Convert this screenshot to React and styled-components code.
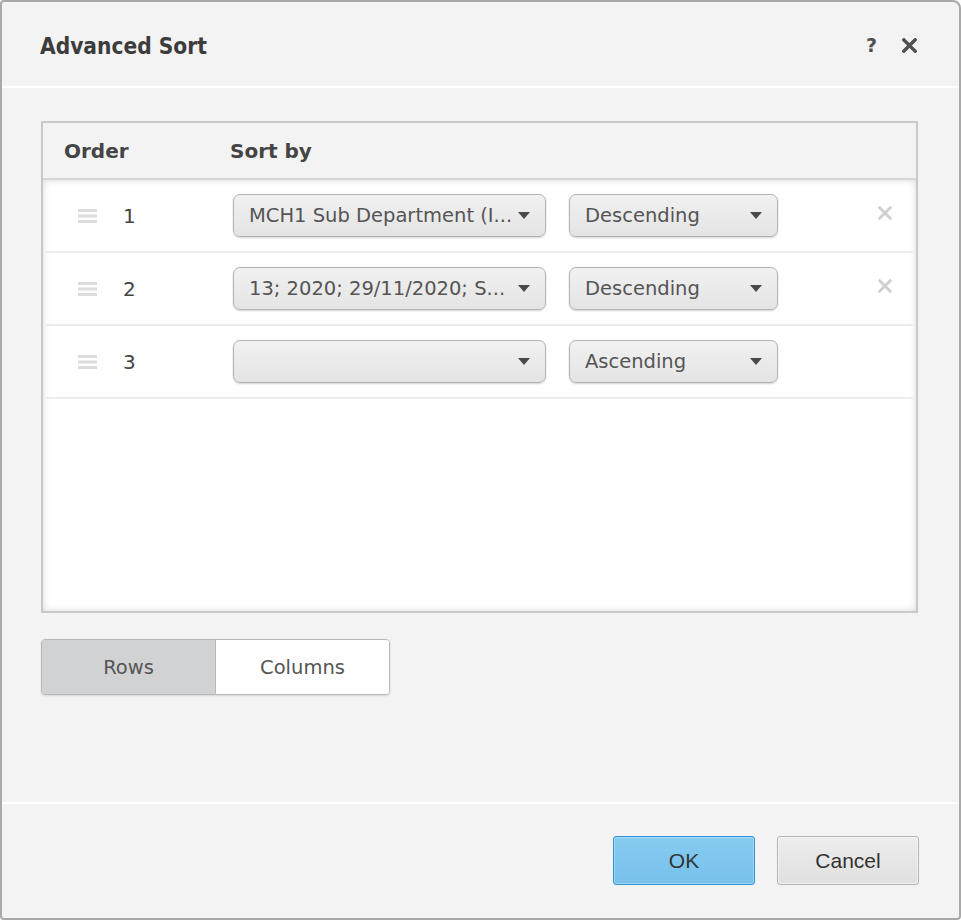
import React from 'react';
import styled, { createGlobalStyle } from 'styled-components';

const GlobalStyle = createGlobalStyle`
    html, body {
        margin: 0;
        padding: 0;
        background: #ffffff;
    }
    body {
        font-family: "DejaVu Sans", "Liberation Sans", sans-serif;
    }
`;

const sortRows = [
    { order: 1, field: 'MCH1 Sub Department (I...', direction: 'Descending', removable: true },
    { order: 2, field: '13; 2020; 29/11/2020; S...', direction: 'Descending', removable: true },
    { order: 3, field: '', direction: 'Ascending', removable: false }
];

const DragHandle = () => (
    <svg width="19" height="14" viewBox="0 0 19 14">
        <rect x="0" y="0" width="19" height="3" fill="#dcdcdc" />
        <rect x="0" y="5.5" width="19" height="3" fill="#dcdcdc" />
        <rect x="0" y="11" width="19" height="3" fill="#dcdcdc" />
    </svg>
);

const Caret = () => (
    <svg width="12" height="7" viewBox="0 0 12 7">
        <polygon points="0,0 12,0 6,7" fill="#4a4a4a" />
    </svg>
);

const Cross = ({ size, color, weight }) => (
    <svg width={size} height={size} viewBox="0 0 12 12">
        <path d="M1.5 1.5 L10.5 10.5 M10.5 1.5 L1.5 10.5" stroke={color} strokeWidth={weight} strokeLinecap="square" />
    </svg>
);

export default function App() {
    return (
        <>
            <GlobalStyle />
            <Dialog>
                <Header>
                    <Title>Advanced Sort</Title>
                    <HeaderTools>
                        <HelpMark>?</HelpMark>
                        <Cross size={15} color="#505050" weight={2.8} />
                    </HeaderTools>
                </Header>
                <Body>
                    <Panel>
                        <GridHead>
                            <OrderHead>Order</OrderHead>
                            <span>Sort by</span>
                        </GridHead>
                        <GridRows>
                            {sortRows.map(row => (
                                <Row key={row.order}>
                                    <Handle><DragHandle /></Handle>
                                    <OrderNum>{row.order}</OrderNum>
                                    <Select width={313}>
                                        <SelectText>{row.field}</SelectText>
                                        <Caret />
                                    </Select>
                                    <Select width={209}>
                                        <SelectText>{row.direction}</SelectText>
                                        <Caret />
                                    </Select>
                                    <Remove>
                                        {row.removable && <Cross size={14} color="#cfcfcf" weight={2.4} />}
                                    </Remove>
                                </Row>
                            ))}
                        </GridRows>
                    </Panel>
                    <Toggle>
                        <ToggleOption active>Rows</ToggleOption>
                        <ToggleOption>Columns</ToggleOption>
                    </Toggle>
                </Body>
                <Footer>
                    <DialogButton primary>OK</DialogButton>
                    <DialogButton>Cancel</DialogButton>
                </Footer>
            </Dialog>
        </>
    );
}

const Dialog = styled.div`
    box-sizing: border-box;
    width: 961px;
    height: 920px;
    background: #f3f3f3;
    border: 2px solid #a9a9a9;
    border-radius: 4px 8px 4px 4px;
    display: flex;
    flex-direction: column;
    color: #454545;
`;

const Header = styled.div`
    height: 84px;
    display: flex;
    align-items: center;
    justify-content: space-between;
    padding: 0 42px 0 38px;
    border-bottom: 2px solid #ffffff;
`;

const Title = styled.h1`
    margin: 0;
    padding-top: 4px;
    font-family: "DejaVu Sans Condensed", "DejaVu Sans", sans-serif;
    font-size: 22.5px;
    font-weight: 700;
    color: #3c3c3c;
`;

const HeaderTools = styled.div`
    display: flex;
    align-items: center;
    gap: 25px;
    padding-top: 2px;
`;

const HelpMark = styled.span`
    font-size: 19px;
    font-weight: 700;
    color: #505050;
`;

const Body = styled.div`
    flex: 1;
    padding: 33px 41px 0 39px;
`;

const Panel = styled.div`
    height: 492px;
    border: 2px solid #c9c9c9;
    display: flex;
    flex-direction: column;
    box-sizing: border-box;
`;

const GridHead = styled.div`
    height: 55px;
    flex-shrink: 0;
    display: flex;
    align-items: center;
    padding-left: 21px;
    font-size: 20px;
    font-weight: 700;
    color: #444444;
    border-bottom: 2px solid #d6d6d6;
`;

const OrderHead = styled.span`
    width: 166px;
`;

const GridRows = styled.div`
    flex: 1;
    background: #ffffff;
    box-shadow: inset 0 0 7px rgba(0, 0, 0, 0.16);
    padding: 0 3px 0 3px;
`;

const Row = styled.div`
    height: 71px;
    display: flex;
    align-items: center;
    border-bottom: 2px solid #ececec;
`;

const Handle = styled.div`
    width: 19px;
    margin-left: 32px;
    display: flex;
`;

const OrderNum = styled.span`
    width: 110px;
    margin-left: 26px;
    font-size: 20px;
    color: #444444;
`;

const Select = styled.div`
    box-sizing: border-box;
    width: ${p => p.width}px;
    height: 43px;
    margin-right: 23px;
    padding: 0 15px 0 15px;
    display: flex;
    align-items: center;
    justify-content: space-between;
    border: 1.5px solid #b3b3b3;
    border-radius: 7px;
    background: linear-gradient(#f1f1f1, #e4e4e4);
    box-shadow: 0 1px 2px rgba(0, 0, 0, 0.18);
`;

const SelectText = styled.span`
    font-size: 19.5px;
    color: #555555;
    white-space: nowrap;
`;

const Remove = styled.div`
    margin-left: auto;
    margin-right: 21px;
    width: 14px;
    display: flex;
    padding-bottom: 6px;
`;

const Toggle = styled.div`
    margin-top: 26px;
    width: 349px;
    height: 56px;
    box-sizing: border-box;
    display: flex;
    border: 1.5px solid #b9b9b9;
    border-radius: 4px;
    overflow: hidden;
    box-shadow: 0 1px 2px rgba(0, 0, 0, 0.12);
`;

const ToggleOption = styled.div`
    flex: 1;
    display: flex;
    align-items: center;
    justify-content: center;
    font-size: 19.5px;
    color: #555555;
    background: ${p => (p.active ? '#d1d2d4' : '#ffffff')};
    border-right: ${p => (p.active ? '1.5px solid #b9b9b9' : 'none')};
`;

const Footer = styled.div`
    height: 116px;
    border-top: 2px solid #ffffff;
    display: flex;
    justify-content: flex-end;
    gap: 22px;
    padding: 32px 40px 0 0;
    box-sizing: border-box;
`;

const DialogButton = styled.button`
    width: 142px;
    height: 49px;
    border-radius: 3px;
    font-family: "Liberation Sans", Arial, sans-serif;
    font-size: 21px;
    color: #333333;
    cursor: pointer;
    border: 1.5px solid ${p => (p.primary ? '#2f93d6' : '#b4b4b4')};
    background: ${p => (p.primary
        ? 'linear-gradient(#86cbf0, #76c1eb)'
        : 'linear-gradient(#ededed, #e0e0e0)')};
    box-shadow: inset 0 0 0 1px ${p => (p.primary ? 'rgba(255,255,255,0.3)' : 'rgba(255,255,255,0.5)')};
`;
